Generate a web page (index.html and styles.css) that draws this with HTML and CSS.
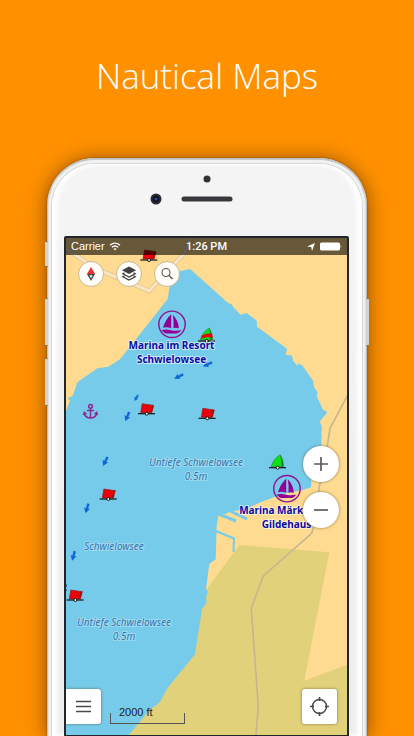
FILE: index.html
```html
<!DOCTYPE html>
<html lang="en">
<head>
<meta charset="utf-8">
<meta name="viewport" content="width=device-width, initial-scale=1">
<title>Nautical Maps</title>
<link rel="stylesheet" href="styles.css">
</head>
<body>
<main class="promo">
  <h1 class="promo-title">Nautical Maps</h1>
  <div class="phone">
    <span class="key key-mute"></span>
    <span class="key key-up"></span>
    <span class="key key-down"></span>
    <span class="key key-power"></span>
    <div class="phone-face">
      <svg class="sensors" width="114" height="36" viewBox="0 0 114 36" aria-hidden="true">
        <circle cx="57" cy="7" r="3.500" fill="#333337"/>
        <circle cx="6" cy="27" r="5.500" fill="#2c2d33"/>
        <circle cx="6" cy="27" r="3.400" fill="#10131f"/>
        <circle cx="6" cy="27" r="1.600" fill="#28489a"/>
        <rect x="31.500" y="24.500" width="51" height="5" rx="2.500" fill="#37383b"/>
      </svg>
      <div class="screen">
        <svg class="map" viewBox="66 238 281 497" preserveAspectRatio="xMidYMin slice" role="img" aria-label="Nautical map of Schwielowsee">
          <defs>
            <g id="red-buoy">
              <path d="M-6-1-4.500-10 7-8.300 5-1z" fill="#e90008" stroke="#92231f" stroke-width=".7"/>
              <path d="M5-8.600 7-8.300 5-1 3.600-1z" fill="#a90c10"/>
              <path d="M-8.700 0H8.300" stroke="#111" stroke-width="1.200"/>
              <circle r="1.500" fill="#fff" stroke="#111"/>
            </g>
            <g id="green-buoy">
              <path d="M-6.500-1Q-4.500-9 2.500-13Q6-7 5.700-1z" fill="#0be019" stroke="#3a7a3a" stroke-width=".6"/>
              <path d="M2.500-13Q6-7 5.700-1H3.800Q4.200-7 2.500-13z" fill="#147b22"/>
              <path d="M-8.700 0H8.300" stroke="#111" stroke-width="1.200"/>
              <circle r="1.500" fill="#fff" stroke="#111"/>
            </g>
            <g id="marina">
              <circle r="13.200" fill="none" stroke="#8d1492" stroke-width="1.400"/>
              <path d="M-9 3.500Q-6.500-5-.8-10V4Q-5 2.300-9 3.500z" fill="#930097"/>
              <path d="M.8-9.500Q6.800-3 6.800 4.200Q4 3 1.500 4Q2-3 .8-9.500z" fill="#930097"/>
              <path d="M-10.500 5.700Q-4 4.700 0 6.200Q5 7 9.500 5.800Q7.500 8.600 4.800 9.200H-6Q-9 8-10.500 5.700z" fill="#930097"/>
            </g>
            <path id="flow" d="M-1.200-5 1.300-5 1.100 0 3-.5-.2 5-3.200-.5-1.200 0z" fill="#0f67d6"/>
          </defs>
          <rect x="66" y="238" width="281" height="497" fill="#fedb90"/>
          <path d="M66.700 249 85 261.500 103 271.700 149.300 291 166.700 271.700 184 254 191 238" fill="none" stroke="#dfc598" stroke-width="4.500"/>
          <path d="M66.700 249 85 261.500 103 271.700 149.300 291 166.700 271.700 184 254 191 238" fill="none" stroke="#fae5c0" stroke-width="3"/>
          <path d="M239.300 545 329.300 552.300 304.300 680.700 348 664.500V735H120L190 610 206 590z" fill="#e2d17b"/>
          <path d="M190 269 200 277.700 228.300 303.300 231.700 304 233.300 307.300 240.700 314.700 246.700 313 256.700 320.700 257 326.700 287 348.700 285.700 355 291.700 355.300 293.300 361 297.300 366 298.300 363.300 302.700 366 313.300 381 314 386.700 317.700 392.700 316.700 396 322.700 409.300 327.300 412.300 319.700 421.700 321.700 426 321 460 311.500 470 311 487.300 303 490 283 494 261.700 501.700 246 509 230 511.700 225 514.300 217.500 513.300 218 518 216.700 525 215.700 559.300 209.300 564 206 589.300 208 591 206 597.300 206.700 602.300 202 609.300 195 654.300 167.700 687.700 160 701.700 156.700 705 150 709.300 129 735H66V411L70 400.700 67.700 398.300 72.700 395.700 77.300 382.300 97.300 368.300 108.300 366.700 120 359.300 167.700 299 170 284 171 273z" fill="#76cbea"/>
          <path d="M217 513.500 236 521M228 510 247 519" fill="none" stroke="#76cbea" stroke-width="3"/>
          <path d="M218 518 228 520" stroke="#fedb90" stroke-width="2"/>
          <path d="M216 531 234 538.500 233.500 552" fill="none" stroke="#76cbea" stroke-width="2"/>
          <path d="M348 394.500 330 428.300 325 462 319.300 487 314 526 311.700 533.300 263.300 576 251.300 608.300 258.300 706.700 256 735" fill="none" stroke="#c6b68f" stroke-width="1.600"/>

          <use href="#flow" transform="translate(178.700 376.700) rotate(62)"/>
          <use href="#flow" transform="translate(207.500 364.500) rotate(64)"/>
          <use href="#flow" transform="translate(136.300 398) rotate(30) scale(.7)"/>
          <use href="#flow" transform="translate(127.300 416.700) rotate(22)"/>
          <use href="#flow" transform="translate(105.300 461.500) rotate(25)"/>
          <use href="#flow" transform="translate(87 508.500) rotate(16)"/>
          <use href="#flow" transform="translate(73.500 556) rotate(14)"/>
          <path d="M66.300 584v3M66.300 589v2" stroke="#2e62a0"/>

          <use href="#red-buoy" x="149" y="260"/>
          <use href="#red-buoy" x="146.700" y="413.700"/>
          <use href="#red-buoy" x="207.300" y="418.300"/>
          <use href="#red-buoy" x="108.300" y="499"/>
          <use href="#red-buoy" x="75.300" y="600"/>
          <use href="#green-buoy" x="277.700" y="467.700"/>
          <use href="#green-buoy" x="206.700" y="341"/>
          <path d="M202 335.500Q207 332.500 212.300 334L212.500 338Q206 336 201 339z" fill="#e90008"/>
          <use href="#marina" x="172" y="324.300"/>
          <use href="#marina" x="287" y="488.700"/>
          <g fill="none" stroke="#8b2a94" stroke-width="1.500">
            <circle cx="90.500" cy="406.300" r="1.900"/>
            <path d="M90.500 408.500V418M87 410.500H94M84 413Q85.500 418 90.500 418Q95.500 418 97 413"/>
          </g>
          <path d="M82.700 415.300 84 411 87.300 414zM98.300 415.300 97 411 93.700 414z" fill="#8b2a94"/>

          <g class="place">
            <text x="171.500" y="349">Marina im Resort</text>
            <text x="171.500" y="363">Schwielowsee</text>
            <text x="286.500" y="514">Marina Märkisches</text>
            <text x="286.500" y="528">Gildehaus</text>
          </g>
          <g class="depth">
            <text x="196" y="466">Untiefe Schwielowsee</text>
            <text x="196" y="480">0.5m</text>
            <text x="114" y="550">Schwielowsee</text>
            <text x="124" y="626">Untiefe Schwielowsee</text>
            <text x="124" y="640">0.5m</text>
          </g>
        </svg>

        <div class="overlay">
          <div class="status">
            <span class="carrier">Carrier
              <svg width="12" height="9" viewBox="0 0 12 9" aria-hidden="true">
                <path d="M1 3.300Q6-1 11 3.300M2.900 5.300Q6 2.600 9.100 5.300" fill="none" stroke="#fff" stroke-width="1.300"/>
                <path d="M4.400 6.800Q6 5.500 7.600 6.800L6 8.500z" fill="#fff"/>
              </svg>
            </span>
            <span class="clock">1:26 PM</span>
            <span class="indicators">
              <svg width="8" height="8" viewBox="0 0 8 8" aria-hidden="true"><path d="M8 0 5 8 4.200 4 0 3.600z" fill="#fff"/></svg>
              <svg width="22" height="9" viewBox="0 0 22 9" aria-hidden="true"><rect y=".5" width="20" height="8" rx="1.500" fill="#fff"/><path d="M20.700 3Q22 4.500 20.700 6z" fill="#fff"/></svg>
            </span>
          </div>
          <div class="tools">
            <button class="round" type="button" aria-label="Compass">
              <svg width="24" height="24" viewBox="0 0 24 24" aria-hidden="true"><path d="M12 5 16 12H8z" fill="#ee2f2a"/><path d="M8 12H16L12 19z" fill="#444"/><path d="M10.300 13.200H13.700L12 16.300z" fill="#fff"/></svg>
            </button>
            <button class="round" type="button" aria-label="Layers">
              <svg width="24" height="24" viewBox="0 0 24 24" aria-hidden="true"><path d="M12 4.500 19 8.300 12 12 5 8.300z" fill="#404040"/><path d="M7.500 10.800 5.800 11.700 12 15 18.200 11.700 16.500 10.800M7.500 13.800 5.800 14.700 12 18 18.200 14.700 16.500 13.800" fill="none" stroke="#404040" stroke-width="1.200"/></svg>
            </button>
            <button class="round" type="button" aria-label="Search">
              <svg width="24" height="24" viewBox="0 0 24 24" aria-hidden="true"><circle cx="11" cy="10.500" r="4" fill="none" stroke="#555" stroke-width="1.100"/><path d="M13.800 13.300 17.500 17" stroke="#555" stroke-width="1.400"/></svg>
            </button>
          </div>
          <div class="bottom">
            <button class="square square-left" type="button" aria-label="Menu">
              <svg width="15" height="13" viewBox="0 0 15 13" aria-hidden="true"><path d="M0 1.500H15M0 6.500H15M0 11.500H15" stroke="#4a4a4a" stroke-width="1.700"/></svg>
            </button>
            <span class="scale">2000 ft</span>
            <button class="square" type="button" aria-label="My location">
              <svg width="21" height="21" viewBox="0 0 21 21" aria-hidden="true"><circle cx="10.500" cy="10.500" r="7" fill="none" stroke="#4a4a4a" stroke-width="1.500"/><path d="M10.500 1V5M10.500 16V20M1 10.500H5M16 10.500H20" stroke="#4a4a4a" stroke-width="1.700"/></svg>
            </button>
          </div>
        </div>

        <div class="zoom">
          <button class="zoom-button" type="button" aria-label="Zoom in">
            <svg width="16" height="16" viewBox="0 0 16 16" aria-hidden="true"><path d="M8 1V15M1 8H15" stroke="#5c5c5c" stroke-width="1.700"/></svg>
          </button>
          <button class="zoom-button" type="button" aria-label="Zoom out">
            <svg width="16" height="16" viewBox="0 0 16 16" aria-hidden="true"><path d="M1 8H15" stroke="#5c5c5c" stroke-width="1.700"/></svg>
          </button>
        </div>
      </div>
    </div>
  </div>
</main>
</body>
</html>
```
FILE: styles.css
```css
* {
  box-sizing: border-box;
}

body {
  margin: 0;
  background: #ff9100;
  font-family: "Liberation Sans", Arial, sans-serif;
}

.promo {
  display: flex;
  flex-direction: column;
  align-items: center;
  height: 100vh;
  min-height: 640px;
  overflow: hidden;
}

.promo-title {
  margin: 0;
  padding: 56px 0 62px;
  color: #fff;
  font: 300 35px/40px "Open Sans", Lato, sans-serif;
}

.phone {
  position: relative;
  flex: 1;
  display: flex;
  width: 78%;
  min-width: 320px;
  max-width: 320px;
  padding: 0 5px;
  border-radius: 48px 48px 0 0;
  background: linear-gradient(90deg, #b0b2b3 0, #f2f3f3 2px, #d4d6d7 4px, #f4f4f4 6px, #f4f4f4 calc(100% - 6px), #d4d6d7 calc(100% - 4px), #f2f3f3 calc(100% - 2px), #a9abac 100%);
  box-shadow: inset 0 2px 2px #b9bbbd, 0 0 2px rgba(70, 50, 20, 0.6), 0 2px 20px rgba(70, 35, 0, 0.65);
}

.phone-face {
  flex: 1;
  display: flex;
  flex-direction: column;
  margin-top: 6px;
  padding: 11px 13px 0 12px;
  border-radius: 43px 43px 0 0;
  background: linear-gradient(#f4f4f5, #f4f4f5 60px, #edeeef 360px);
  box-shadow: 0 0 0 1px #d5d7d8, 0 -1px 0 3px #f0f1f1, inset 5px 0 5px #fff, inset -5px 0 5px #fff;
}

.key {
  position: absolute;
  left: -2px;
  width: 3px;
  height: 48px;
  border: solid #77736d;
  border-width: 1px 0;
  border-radius: 2px;
  background: #d4d3d1;
}

.key-mute {
  top: 83px;
  height: 26px;
}

.key-up {
  top: 140px;
}

.key-down {
  top: 200px;
}

.key-power {
  top: 140px;
  right: -2px;
  left: auto;
}

.sensors {
  flex: none;
  align-self: center;
  margin-top: -3px;
  margin-bottom: 28px;
}

.screen {
  flex: 1;
  display: grid;
  min-height: 0;
  border: 2px solid #22262a;
  border-bottom-width: 1px;
  border-radius: 2px 2px 0 0;
  overflow: hidden;
}

.map,
.overlay,
.zoom {
  grid-area: 1 / 1;
}

.map {
  width: 100%;
  height: 100%;
  min-height: 0;
}

.place,
.depth {
  font-family: "Noto Sans", sans-serif;
  font-size: 10px;
  text-anchor: middle;
  paint-order: stroke;
  stroke-linejoin: round;
}

.place {
  fill: #0c0ca4;
  stroke: rgba(255, 255, 255, 0.6);
  stroke-width: 2px;
  font-weight: 700;
}

.depth {
  fill: #3676b0;
  stroke: rgba(255, 255, 255, 0.3);
  stroke-width: 2px;
  font-style: italic;
}

.overlay {
  display: flex;
  flex-direction: column;
}

.status {
  display: grid;
  grid-template-columns: 1fr auto 1fr;
  align-items: center;
  height: 17px;
  padding: 0 5px;
  background: rgba(0, 0, 0, 0.6);
  color: #fff;
  font-size: 11px;
  line-height: 17px;
}

.carrier {
  display: flex;
  align-items: center;
  gap: 4px;
}

.clock {
  font-family: Roboto, "Liberation Sans", sans-serif;
  font-weight: 500;
}

.indicators {
  display: flex;
  align-items: center;
  justify-content: flex-end;
  gap: 5px;
}

.tools {
  display: flex;
  gap: 12px;
  padding: 6px 12px;
}

button {
  display: flex;
  align-items: center;
  justify-content: center;
  padding: 0;
  border: 0;
  background: #fff;
}

.round {
  width: 26px;
  height: 26px;
  border: 1px solid #c9b994;
  border-radius: 50%;
  background: #fffdf7;
}

.zoom {
  display: flex;
  flex-direction: column;
  gap: 10px;
  place-self: center end;
  margin-right: 8px;
}

.zoom-button {
  width: 36px;
  height: 36px;
  border-radius: 50%;
  box-shadow: 0 0 3px rgba(60, 50, 20, 0.6);
}

.bottom {
  display: flex;
  align-items: flex-end;
  margin-top: auto;
  padding: 0 10px 11px 0;
}

.square {
  width: 35px;
  height: 35px;
  margin-left: auto;
  border-radius: 3px;
  box-shadow: 0 0 3px rgba(60, 50, 20, 0.6);
}

.square-left {
  margin-left: 0;
  border-radius: 0 3px 3px 0;
}

.scale {
  position: relative;
  width: 75px;
  margin-left: 9px;
  padding: 0 9px 5px;
  color: #222;
  font-size: 11px;
  line-height: 13px;
}

.scale::after {
  content: "";
  position: absolute;
  inset: auto 0 0;
  height: 10px;
  border: solid #555;
  border-width: 0 1px 1px;
}
```
